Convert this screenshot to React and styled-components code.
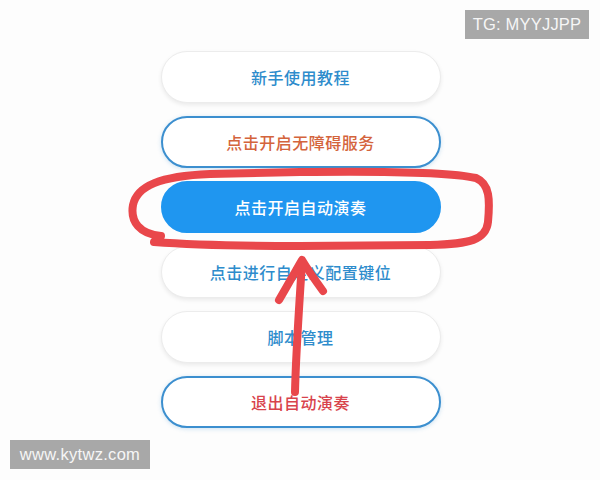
import React from "react";
import styled, { createGlobalStyle, css } from "styled-components";

const GlobalStyle = createGlobalStyle`
  html, body {
    margin: 0;
    padding: 0;
    background: #fdfdfd;
  }
  body {
    font-family: "Noto Sans CJK SC", "Noto Sans", sans-serif;
  }
`;

const Page = styled.div`
  position: relative;
  width: 600px;
  height: 480px;
  overflow: hidden;
  background: #fdfdfd;
`;

const Menu = styled.div`
  display: flex;
  flex-direction: column;
  align-items: center;
  gap: 13px;
  padding-top: 51px;
  padding-left: 1px;
`;

const variants = {
  plain: css`
    background: #ffffff;
    border: 1px solid #ececec;
    box-shadow: 0 2px 4px rgba(0, 0, 0, 0.08);
  `,
  outline: css`
    background: #ffffff;
    border: 2px solid #3c8fcf;
    box-shadow: 0 1px 4px rgba(60, 143, 207, 0.25);
  `,
  filled: css`
    background: #1f96f0;
    border: 2px solid #1f96f0;
  `,
};

const MenuButton = styled.div`
  box-sizing: border-box;
  width: 280px;
  height: 52px;
  border-radius: 26px;
  display: flex;
  align-items: center;
  justify-content: center;
  font-size: 16px;
  font-weight: 500;
  letter-spacing: 0.5px;
  color: ${(p) => p.$color};
  ${(p) => variants[p.$variant]}
`;

const Watermark = styled.div`
  position: absolute;
  box-sizing: border-box;
  background: #a8a8a8;
  color: #f6f6f6;
  font-family: "Liberation Sans", Arial, sans-serif;
  font-size: 16.5px;
  height: 29px;
  line-height: 29px;
  text-align: center;
  ${(p) =>
    p.$corner === "top"
      ? css`
          top: 10px;
          right: 11px;
          width: 124px;
          letter-spacing: 0.2px;
        `
      : css`
          bottom: 11px;
          left: 10px;
          width: 140px;
          letter-spacing: 0.3px;
        `}
`;

const Scribble = styled.svg`
  position: absolute;
  left: 0;
  top: 0;
  pointer-events: none;
`;

const items = [
  { label: "新手使用教程", variant: "plain", color: "#2e8ccc" },
  { label: "点击开启无障碍服务", variant: "outline", color: "#d4643c" },
  { label: "点击开启自动演奏", variant: "filled", color: "#ffffff" },
  { label: "点击进行自定义配置键位", variant: "plain", color: "#2e8ccc" },
  { label: "脚本管理", variant: "plain", color: "#2e8ccc" },
  { label: "退出自动演奏", variant: "outline", color: "#d8434c" },
];

function App() {
  return (
    <Page>
      <GlobalStyle />
      <Menu>
        {items.map((it) => (
          <MenuButton key={it.label} $variant={it.variant} $color={it.color}>
            {it.label}
          </MenuButton>
        ))}
      </Menu>
      <Scribble width="600" height="480" viewBox="0 0 600 480">
        <g
          fill="none"
          stroke="#e9474b"
          strokeWidth="8"
          strokeLinecap="round"
          strokeLinejoin="round"
        >
          <path d="M161 236 C 140 234, 130 222, 133 205 C 137 186, 160 176, 210 174 L 300 172 C 380 171, 450 172, 476 178 C 490 184, 490 200, 488 222 C 486 240, 470 244, 430 245 L 300 246 C 230 246, 180 244, 154 242" />
          <path d="M295 392 C 296 350, 299 310, 302 262" />
          <path d="M279 300 C 288 285, 296 270, 302 260 C 308 270, 315 280, 323 291" />
        </g>
      </Scribble>
      <Watermark $corner="top">TG: MYYJJPP</Watermark>
      <Watermark $corner="bottom">www.kytwz.com</Watermark>
    </Page>
  );
}

export default App;
